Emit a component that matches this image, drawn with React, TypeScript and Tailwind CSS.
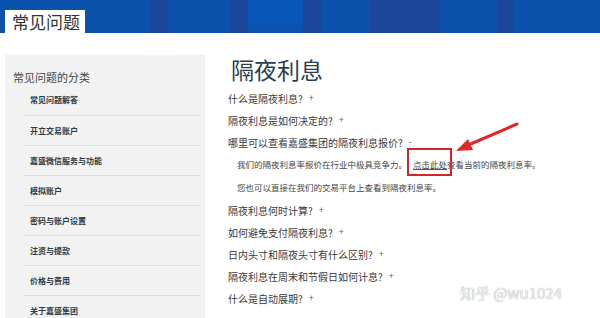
const CATEGORIES = [
  "常见问题解答",
  "开立交易账户",
  "嘉盛微信服务与功能",
  "模拟账户",
  "密码与账户设置",
  "注资与提款",
  "价格与费用",
  "关于嘉盛集团",
];

const BEFORE = ["什么是隔夜利息?", "隔夜利息是如何决定的?"];
const AFTER = [
  "隔夜利息何时计算?",
  "如何避免支付隔夜利息?",
  "日内头寸和隔夜头寸有什么区别?",
  "隔夜利息在周末和节假日如何计息?",
  "什么是自动展期?",
];

const cjk = "font-['Noto_Sans_CJK_SC','Noto_Sans',sans-serif]";

function Question({ text, open }: { text: string; open?: boolean }) {
  return (
    <div className="flex h-[22px] items-center text-[10px] text-[#3a3a3a]">
      <span>{text}</span>
      <span className="ml-[6px] text-[9px] text-[#666]">{open ? "-" : "+"}</span>
    </div>
  );
}

export default function App() {
  return (
    <div className={`relative h-[318px] w-[600px] overflow-hidden bg-white ${cjk}`}>
      {/* header band */}
      <header className="relative h-[33px] w-full">
        <div className="absolute inset-0 flex">
          <div className="w-[150px] bg-[#0b52ad]" />
          <div className="w-[18px] bg-[#1a479a]" />
          <div className="w-[62px] bg-[#0b52ad]" />
          <div className="w-[18px] bg-[#1a479a]" />
          <div className="flex w-[55px] flex-col bg-[#0b52ad]">
            <div className="h-[25px] bg-[#0a56b8]" />
          </div>
          <div className="w-[19px] bg-[#1a479a]" />
          <div className="w-[48px] bg-[#0b52ad]" />
          <div className="w-[70px] bg-[#1a479a]" />
          <div className="w-[57px] bg-[#0b52ad]" />
          <div className="w-[16px] bg-[#1a479a]" />
          <div className="flex-1 bg-[#0b52ad]" />
        </div>
        <div className="absolute bottom-0 left-[5px] flex h-[23px] w-[80px] items-center bg-white pl-[7px] text-[17px] leading-none text-[#333]">
          常见问题
        </div>
      </header>

      <div className="flex pl-[5px] pt-[22px]">
        {/* sidebar */}
        <aside className="h-[300px] w-[200px] shrink-0 bg-[#f2f2f2]">
          <div className="pl-[8px] pt-[14px] text-[11px] leading-[16px] text-[#444]">常见问题的分类</div>
          <ul className="ml-[18px] mr-[5px]">
            {CATEGORIES.map((c, i) => (
              <li
                key={c}
                className={`flex h-[30px] items-center pl-[7px] text-[8px] font-bold text-[#2d3b45] ${
                  i > 0 ? "border-t border-[#dcdcdc]" : ""
                }`}
              >
                {c}
              </li>
            ))}
          </ul>
        </aside>

        {/* content */}
        <main className="ml-[23px] flex-1">
          <h1 className="h-[32px] pl-[3px] text-[23px] leading-[28px] text-[#2a3d4f]">隔夜利息</h1>
          {BEFORE.map((q) => (
            <Question key={q} text={q} />
          ))}
          <Question text="哪里可以查看嘉盛集团的隔夜利息报价?" open />
          <div className="pl-[9px] text-[8.5px] text-[#444]">
            <p className="flex h-[23px] items-center">
              我们的隔夜利息率报价在行业中极具竞争力。
              <span className="relative ml-[6px] underline decoration-[#555]">
                点击此处
                <span className="absolute -left-[6px] -right-[5px] -top-[10px] -bottom-[5px] border-2 border-[#d9232a]" />
              </span>
              查看当前的隔夜利息率。
            </p>
            <p className="flex h-[23px] items-center">您也可以直接在我们的交易平台上查看到隔夜利息率。</p>
          </div>
          {AFTER.map((q) => (
            <Question key={q} text={q} />
          ))}
        </main>
      </div>

      {/* annotation arrow */}
      <svg className="absolute left-[450px] top-[118px]" width="75" height="40" viewBox="0 0 75 40">
        <line x1="67" y1="6" x2="16" y2="28" stroke="#e0262b" strokeWidth="3" strokeLinecap="round" />
        <polygon points="6,33 18,21 23,32" fill="#e0262b" />
      </svg>

      {/* watermark */}
      <div className="absolute left-[460px] top-[283px] text-[15px] leading-[20px] text-[#ececec] [text-shadow:0_0_1px_#9a9a9a]">
        知乎 @wu1024
      </div>
    </div>
  );
}
